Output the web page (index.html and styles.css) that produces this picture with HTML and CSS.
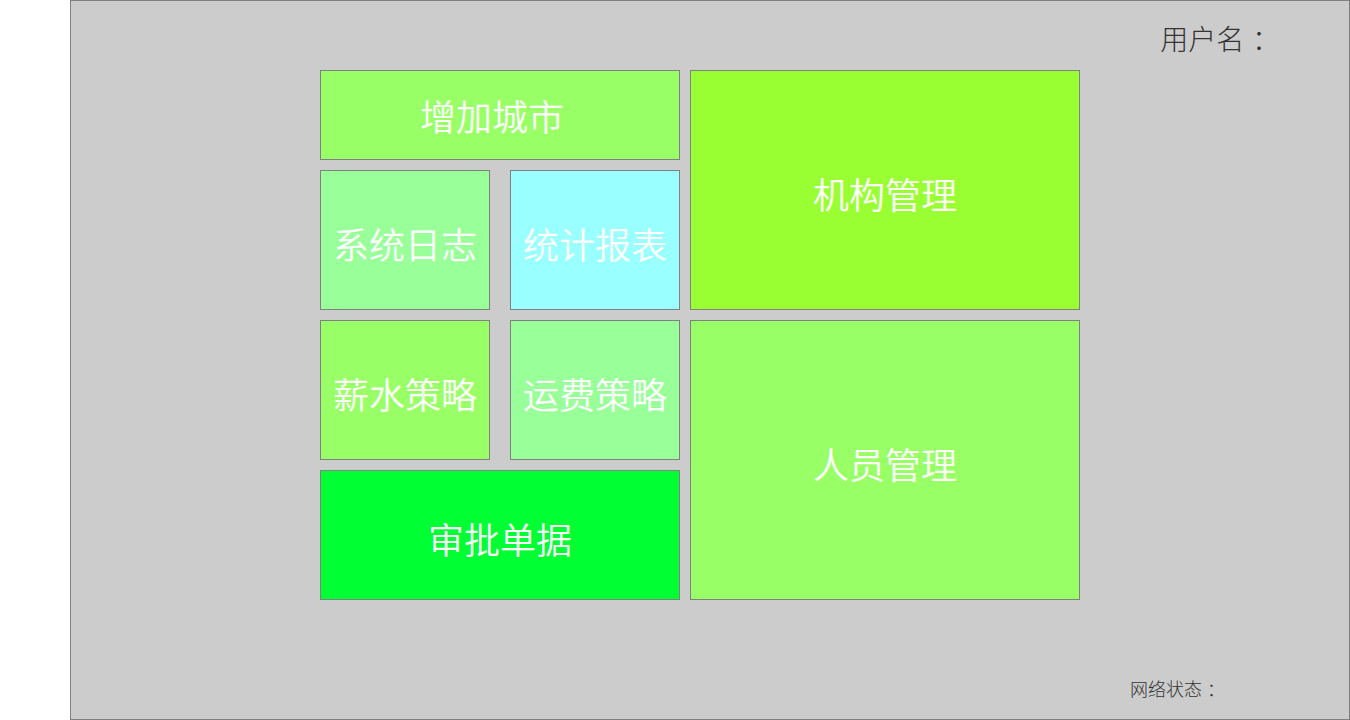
FILE: index.html
```html
<!DOCTYPE html>
<html lang="zh-CN">
<head>
  <meta charset="UTF-8">
  <title>主页</title>
  <link rel="stylesheet" href="styles.css">
</head>
<body>
  <div class="main">
    <div class="top-bar">用户名<span class="colon">：</span></div>

    <div class="tiles">
      <div class="tile t-city">增加城市</div>
      <div class="tile t-org">机构管理</div>
      <div class="tile t-log">系统日志</div>
      <div class="tile t-report">统计报表</div>
      <div class="tile t-salary">薪水策略</div>
      <div class="tile t-freight">运费策略</div>
      <div class="tile t-staff">人员管理</div>
      <div class="tile t-approve">审批单据</div>
    </div>

    <div class="status-bar">网络状态<span class="colon">：</span></div>
  </div>
</body>
</html>
```

FILE: styles.css
```css
body {
  margin: 0;
  padding: 0;
  font-family: "Noto Sans CJK SC", "Noto Sans", sans-serif;
  background: #ffffff;
}

.main {
  margin-left: 70px;
  width: 1280px;
  height: 720px;
  box-sizing: border-box;
  background: #cccccc;
  border: 1px solid #808080;
  padding-top: 17px;
}

.colon {
  margin-left: 0.28em;
}

.top-bar {
  text-align: right;
  padding-right: 69px;
  font-size: 28px;
  font-weight: 300;
  line-height: 40px;
  color: #333333;
}

.tiles {
  display: grid;
  grid-template-columns: 170px 20px 170px 10px 390px;
  grid-template-rows: 90px 140px 140px 130px;
  row-gap: 10px;
  margin-top: 12px;
  margin-left: 249px;
}

.tile {
  box-sizing: border-box;
  border: 1px solid #808080;
  display: flex;
  align-items: center;
  justify-content: center;
  padding-top: 6px;
  color: #ffffff;
  font-size: 36px;
  font-weight: 350;
}

.t-city { grid-column: 1 / 4; grid-row: 1; background: #99ff66; padding-right: 16px; padding-top: 0; }
.t-org { grid-column: 5; grid-row: 1 / 3; background: #99ff33; }
.t-log { grid-column: 1; grid-row: 2; background: #99ff99; }
.t-report { grid-column: 3; grid-row: 2; background: #99ffff; }
.t-salary { grid-column: 1; grid-row: 3; background: #99ff66; }
.t-freight { grid-column: 3; grid-row: 3; background: #99ff99; }
.t-staff { grid-column: 5; grid-row: 3 / 5; background: #99ff66; }
.t-approve { grid-column: 1 / 4; grid-row: 4; background: #00ff33; }

.status-bar {
  margin-top: 76px;
  text-align: right;
  padding-right: 124px;
  font-size: 18px;
  font-weight: 300;
  line-height: 24px;
  color: #333333;
}
```
